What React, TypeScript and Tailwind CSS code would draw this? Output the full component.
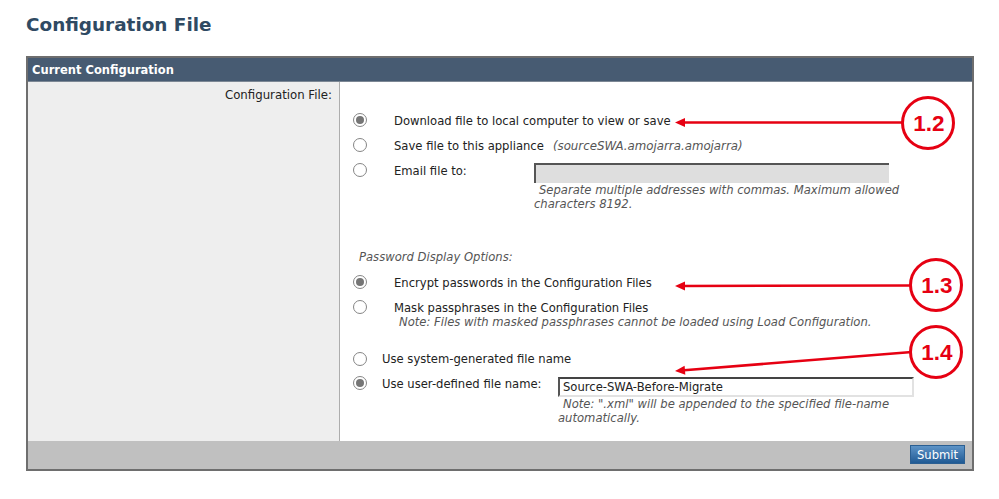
const sans = "font-['DejaVu_Sans',Verdana,sans-serif]";

function Radio({ checked = false }: { checked?: boolean }) {
  return (
    <span className="mt-[5px] flex h-[14px] w-[14px] shrink-0 items-center justify-center rounded-full border-[1.5px] border-[#858585] bg-white">
      {checked && <span className="h-[8px] w-[8px] rounded-full bg-[#757575]" />}
    </span>
  );
}

function Arrow({ x1, y1, x2, y2 }: { x1: number; y1: number; x2: number; y2: number }) {
  const a = Math.atan2(y2 - y1, x2 - x1);
  const p = (len: number, off: number) =>
    `${x2 - len * Math.cos(a) - off * Math.sin(a)},${y2 - len * Math.sin(a) + off * Math.cos(a)}`;
  return (
    <g fill="#e60012" stroke="#e60012">
      <line x1={x1} y1={y1} x2={x2 - 6 * Math.cos(a)} y2={y2 - 6 * Math.sin(a)} strokeWidth="2.6" />
      <polygon points={`${x2},${y2} ${p(10, 4.5)} ${p(10, -4.5)}`} strokeWidth="0" />
    </g>
  );
}

function Callout({ cx, cy, label }: { cx: number; cy: number; label: string }) {
  return (
    <g>
      <circle cx={cx} cy={cy} r="25.5" fill="white" stroke="#e60012" strokeWidth="3" />
      <text
        x={cx + 1}
        y={cy + 8}
        textAnchor="middle"
        fill="#e60012"
        fontSize="22.5"
        fontWeight="700"
        fontFamily="'Liberation Sans', Arial, sans-serif"
      >
        {label}
      </text>
    </g>
  );
}

export default function App() {
  return (
    <div className={`relative h-[499px] w-[999px] overflow-hidden bg-white ${sans} text-[11.6px] leading-[14px] text-[#222]`}>
      <h1 className="pl-[26px] pt-[14px] text-[18.4px] font-bold leading-[22px] text-[#2f4a63]">Configuration File</h1>

      <div className="ml-[26px] mt-[20px] flex h-[415px] w-[948px] flex-col border-2 border-[#6e6e6e]">
        <div className="flex h-[24px] items-center border-b border-[#7c8794] bg-[#475b72] pl-[4px] text-[11.5px] font-bold text-white">
          Current Configuration
        </div>

        <div className="flex flex-1">
          <div className="w-[312px] border-r-[1.5px] border-[#adadad] bg-[#eeeeee] pr-[7px] pt-[6px] text-right text-[11.75px]">
            Configuration File:
          </div>

          <div className="flex-1 pl-[13px] pt-[26px]">
            <div className="flex h-[25px]">
              <Radio checked />
              <span className="ml-[27px] mt-[6px]">Download file to local computer to view or save</span>
            </div>
            <div className="flex h-[25px]">
              <Radio />
              <span className="ml-[27px] mt-[6px]">
                Save file to this appliance
                <em className="ml-[9px] text-[11.8px] text-[#555]">(sourceSWA.amojarra.amojarra)</em>
              </span>
            </div>
            <div className="flex">
              <Radio />
              <span className="ml-[27px] mt-[6px] w-[140px]">Email file to:</span>
              <div className="mt-[5px]">
                <div className="h-[20px] w-[355px] border-l-2 border-t-2 border-[#555] bg-[#dedede]" />
                <p className="whitespace-nowrap italic text-[#555]">
                  <span className="ml-[5px]">Separate multiple addresses with commas. Maximum allowed</span>
                  <br />
                  characters 8192.
                </p>
              </div>
            </div>

            <p className="ml-[6px] mt-[39px] italic text-[#555]">Password Display Options:</p>

            <div className="mt-[6px] flex h-[25px]">
              <Radio checked />
              <span className="ml-[27px] mt-[6px]">Encrypt passwords in the Configuration Files</span>
            </div>
            <div className="flex h-[20px]">
              <Radio />
              <span className="ml-[27px] mt-[6px]">Mask passphrases in the Configuration Files</span>
            </div>
            <p className="ml-[46px] italic text-[#555]">
              Note: Files with masked passphrases cannot be loaded using Load Configuration.
            </p>

            <div className="mt-[18px] flex h-[24px]">
              <Radio />
              <span className="ml-[15px] mt-[5px]">Use system-generated file name</span>
            </div>
            <div className="flex">
              <Radio checked />
              <span className="ml-[15px] mt-[6px] w-[176px]">Use user-defined file name:</span>
              <div className="mt-[6px]">
                <div className="flex h-[20px] w-[356px] items-center border-2 border-b-[#e2e2e2] border-l-[#555] border-r-[#e2e2e2] border-t-[#444] bg-white pl-[3px] text-[#222]">
                  Source-SWA-Before-Migrate
                </div>
                <p className="whitespace-nowrap italic text-[#555]">
                  <span className="ml-[5px]">Note: ".xml" will be appended to the specified file-name</span>
                  <br />
                  automatically.
                </p>
              </div>
            </div>
          </div>
        </div>

        <div className="flex h-[28px] items-start justify-end bg-[#c0c0c0] pr-[7px] pt-[4px]">
          <button className="flex h-[19px] w-[55px] items-center justify-center border border-[#2b5f92] bg-gradient-to-b from-[#5d93c6] to-[#1f5a94] text-[11.6px] text-white">
            Submit
          </button>
        </div>
      </div>

      <svg className="absolute inset-0" width="999" height="499" viewBox="0 0 999 499">
        <Arrow x1={904} y1={122.5} x2={675} y2={122.5} />
        <Callout cx={928} cy={123} label="1.2" />
        <Arrow x1={912} y1={285.5} x2={675} y2={286} />
        <Callout cx={936} cy={285} label="1.3" />
        <Arrow x1={912} y1={352} x2={675} y2={371} />
        <Callout cx={936} cy={352} label="1.4" />
      </svg>
    </div>
  );
}
